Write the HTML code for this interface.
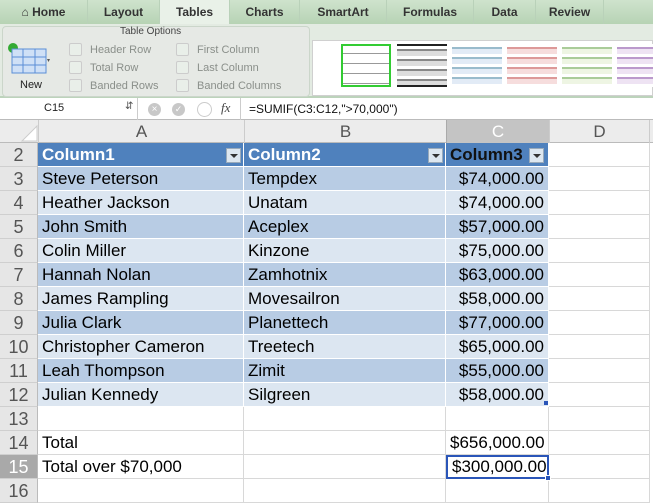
<!DOCTYPE html>
<html><head><style>
*{margin:0;padding:0;box-sizing:border-box}
body{width:653px;height:501px;overflow:hidden;background:#fff;font-family:"Liberation Sans",sans-serif;position:relative}
.a{position:absolute}
.tab{position:absolute;top:0;height:24px;font-size:12px;font-weight:bold;color:#333;text-align:center;line-height:24px;border-right:1px solid #b9d1b9}
.cb{position:absolute;width:13px;height:13px;border:1px solid #ccc;border-radius:2px;background:#e9efe9}
.opt{position:absolute;font-size:11px;color:#8a8f8a}
.row{position:absolute;left:0;width:653px;height:24px;font-size:17px;line-height:24px}
.rh{position:absolute;left:0;width:38px;height:24px;background:#e6e6e6;color:#555;text-align:center;border-bottom:1px solid #cfcfcf;border-right:1px solid #bbb;font-size:18px}
.c{position:absolute;height:24px;padding:0 4px;white-space:nowrap;overflow:hidden;border-bottom:1px solid #d8d8d8;border-right:1px solid #d8d8d8}
.A{left:38px;width:206px}.B{left:244px;width:202px}.C{left:446px;width:103px;text-align:right}.D{left:549px;width:101px}
.dk .c{background:#b8cce4;border-color:#fff}
.lt .c{background:#dce6f1;border-color:#fff}
.dk .D,.lt .D{background:#fff;border-color:#d8d8d8}
.hd .c{background:#4f81bd;color:#fff;font-weight:bold;border-color:#fff}
.hd .D{background:#fff;border-color:#d8d8d8}
.dd{position:absolute;right:2px;top:5px;width:15px;height:15px;background:#dde7f0;border:1px solid #9ab}
.dd:after{content:"";position:absolute;left:3px;top:5px;border-left:4px solid transparent;border-right:4px solid transparent;border-top:4px solid #333}
.sw{position:absolute;top:44px;width:50px;height:43px}
</style></head><body>
<div class="a" style="left:0;top:0;width:653px;height:24px;background:linear-gradient(#cfe3cd,#b7d3b4)"></div>
<div class="tab" style="left:0;width:88px">&#8962; Home</div>
<div class="tab" style="left:88px;width:72px">Layout</div>
<div class="tab" style="left:160px;width:70px;background:#e9f1e8">Tables</div>
<div class="tab" style="left:230px;width:70px">Charts</div>
<div class="tab" style="left:300px;width:87px">SmartArt</div>
<div class="tab" style="left:387px;width:87px">Formulas</div>
<div class="tab" style="left:474px;width:62px">Data</div>
<div class="tab" style="left:536px;width:68px">Review</div>
<div class="a" style="left:0;top:24px;width:653px;height:74px;background:#e3ebe2;border-bottom:2px solid #bcd3bb"></div>
<div class="a" style="left:2px;top:26px;width:308px;height:71px;background:#e6e9e5;border:1px solid #cbd6ca;border-radius:4px"></div>
<div class="a" style="left:312px;top:40px;width:341px;height:56px;background:#fff;border:1px solid #d0d0d0"></div>
<div class="a" style="left:120px;top:26px;font-size:10px;color:#444">Table Options</div>
<svg class="a" style="left:6px;top:42px" width="46" height="32"><circle cx="7" cy="6" r="5" fill="#3a3"/><rect x="6" y="7" width="34" height="24" fill="#cfe0f6" stroke="#5b8ed6"/><path d="M6 15h34M6 23h34M17 7v24M29 7v24" stroke="#5b8ed6"/><path d="M44 17l-3 0l1.5 3z" fill="#555"/></svg>
<div class="a" style="left:20px;top:79px;font-size:11px;color:#222">New</div>
<div class="cb" style="left:69px;top:43px"></div><div class="opt" style="left:90px;top:44px">Header Row</div>
<div class="cb" style="left:69px;top:61px"></div><div class="opt" style="left:90px;top:62px">Total Row</div>
<div class="cb" style="left:69px;top:79px"></div><div class="opt" style="left:90px;top:80px">Banded Rows</div>
<div class="cb" style="left:176px;top:43px"></div><div class="opt" style="left:197px;top:44px">First Column</div>
<div class="cb" style="left:176px;top:61px"></div><div class="opt" style="left:197px;top:62px">Last Column</div>
<div class="cb" style="left:176px;top:79px"></div><div class="opt" style="left:197px;top:80px">Banded Columns</div>
<div class="sw" style="left:341px;border:2px solid #3c3;background:repeating-linear-gradient(#fff 0 7px,#999 7px 8px,#fff 8px 10px)"></div>
<div class="sw" style="left:397px;background:repeating-linear-gradient(#fff 0 3px,#888 3px 5px,#ddd 5px 10px);border-top:2px solid #222;border-bottom:2px solid #222"></div>
<div class="sw" style="left:452px;background:repeating-linear-gradient(#fff 0 3px,#9bc 3px 5px,#e2ebf6 5px 10px)"></div>
<div class="sw" style="left:507px;background:repeating-linear-gradient(#fff 0 3px,#d99 3px 5px,#f6dddd 5px 10px)"></div>
<div class="sw" style="left:562px;background:repeating-linear-gradient(#fff 0 3px,#ac9 3px 5px,#eef5e3 5px 10px)"></div>
<div class="sw" style="left:617px;background:repeating-linear-gradient(#fff 0 3px,#b9c 3px 5px,#eee3f3 5px 10px)"></div>
<div class="a" style="left:0;top:98px;width:653px;height:22px;background:#fff;border-bottom:1px solid #bbb"></div>
<div class="a" style="left:44px;top:102px;font-size:11px;color:#222">C15</div>
<div class="a" style="left:125px;top:101px;font-size:10px;color:#555">&#8693;</div>
<div class="a" style="left:137px;top:98px;width:1px;height:22px;background:#ccc"></div>
<div class="a" style="left:148px;top:103px;width:13px;height:13px;border-radius:50%;background:#c8c8c8;color:#fff;font-size:10px;text-align:center;line-height:13px">×</div>
<div class="a" style="left:172px;top:103px;width:13px;height:13px;border-radius:50%;background:#c8c8c8;color:#fff;font-size:9px;text-align:center;line-height:13px">✓</div>
<div class="a" style="left:197px;top:102px;width:15px;height:15px;border-radius:50%;border:1px solid #ccc"></div>
<div class="a" style="left:221px;top:100px;font-size:13px;font-style:italic;font-family:'Liberation Serif',serif;color:#444">fx</div>
<div class="a" style="left:240px;top:98px;width:1px;height:22px;background:#ccc"></div>
<div class="a" style="left:249px;top:102px;font-size:12px;color:#111">=SUMIF(C3:C12,"&gt;70,000")</div>
<div class="a" style="left:0;top:120px;width:653px;height:23px;background:#ececec;border-bottom:1px solid #bbb"></div>
<svg class="a" style="left:20px;top:124px" width="18" height="18"><path d="M17 2V17H2z" fill="#fff" stroke="#ccc"/></svg>
<div class="a" style="left:38px;top:120px;width:206px;height:23px;border-left:1px solid #ccc;text-align:center;font-size:17px;line-height:23px;color:#555">A</div>
<div class="a" style="left:244px;top:120px;width:202px;height:23px;border-left:1px solid #ccc;text-align:center;font-size:17px;line-height:23px;color:#555">B</div>
<div class="a" style="left:446px;top:120px;width:103px;height:23px;background:#c4c4c4;border-left:1px solid #aaa;text-align:center;font-size:17px;line-height:23px;color:#fff">C</div>
<div class="a" style="left:549px;top:120px;width:101px;height:23px;border-left:1px solid #ccc;border-right:1px solid #ccc;text-align:center;font-size:17px;line-height:23px;color:#555">D</div>
<div class="row hd" style="top:143px"><div class="rh">2</div><div class="c A">Column1<span class="dd"></span></div><div class="c B">Column2<span class="dd"></span></div><div class="c C" style="text-align:left;color:#111">Column3<span class="dd" style="right:4px"></span></div><div class="c D"></div></div>
<div class="row dk" style="top:167px"><div class="rh">3</div><div class="c A">Steve Peterson</div><div class="c B">Tempdex</div><div class="c C">$74,000.00</div><div class="c D"></div></div>
<div class="row lt" style="top:191px"><div class="rh">4</div><div class="c A">Heather Jackson</div><div class="c B">Unatam</div><div class="c C">$74,000.00</div><div class="c D"></div></div>
<div class="row dk" style="top:215px"><div class="rh">5</div><div class="c A">John Smith</div><div class="c B">Aceplex</div><div class="c C">$57,000.00</div><div class="c D"></div></div>
<div class="row lt" style="top:239px"><div class="rh">6</div><div class="c A">Colin Miller</div><div class="c B">Kinzone</div><div class="c C">$75,000.00</div><div class="c D"></div></div>
<div class="row dk" style="top:263px"><div class="rh">7</div><div class="c A">Hannah Nolan</div><div class="c B">Zamhotnix</div><div class="c C">$63,000.00</div><div class="c D"></div></div>
<div class="row lt" style="top:287px"><div class="rh">8</div><div class="c A">James Rampling</div><div class="c B">Movesailron</div><div class="c C">$58,000.00</div><div class="c D"></div></div>
<div class="row dk" style="top:311px"><div class="rh">9</div><div class="c A">Julia Clark</div><div class="c B">Planettech</div><div class="c C">$77,000.00</div><div class="c D"></div></div>
<div class="row lt" style="top:335px"><div class="rh">10</div><div class="c A">Christopher Cameron</div><div class="c B">Treetech</div><div class="c C">$65,000.00</div><div class="c D"></div></div>
<div class="row dk" style="top:359px"><div class="rh">11</div><div class="c A">Leah Thompson</div><div class="c B">Zimit</div><div class="c C">$55,000.00</div><div class="c D"></div></div>
<div class="row lt" style="top:383px"><div class="rh">12</div><div class="c A">Julian Kennedy</div><div class="c B">Silgreen</div><div class="c C">$58,000.00</div><div class="c D"></div></div>
<div class="row" style="top:407px"><div class="rh">13</div><div class="c A"></div><div class="c B"></div><div class="c C"></div><div class="c D"></div></div>
<div class="row" style="top:431px"><div class="rh">14</div><div class="c A">Total</div><div class="c B"></div><div class="c C">$656,000.00</div><div class="c D"></div></div>
<div class="row" style="top:455px"><div class="rh" style="background:#a9a9a9;color:#fff">15</div><div class="c A">Total over $70,000</div><div class="c B"></div><div class="c C" style="border:2px solid #2a55b8;padding-right:2px;line-height:20px">$300,000.00</div><div class="c D"></div></div>
<div class="row" style="top:479px"><div class="rh">16</div><div class="c A"></div><div class="c B"></div><div class="c C"></div><div class="c D"></div></div>
<div class="a" style="left:545px;top:475px;width:6px;height:6px;background:#2a55b8;border:1px solid #fff"></div>
<div class="a" style="left:544px;top:401px;width:4px;height:4px;background:#2a55b8"></div>
</body></html>
